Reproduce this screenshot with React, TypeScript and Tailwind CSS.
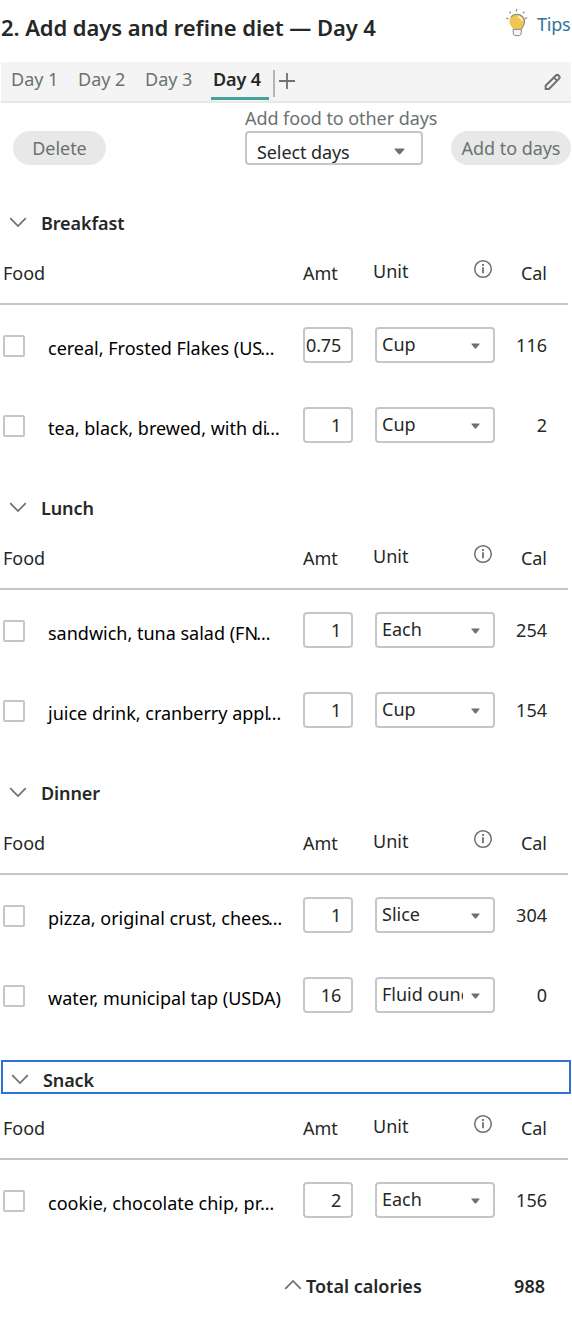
import { ReactNode } from 'react';

type Food = { name: string; cut?: boolean; amt: string; unit: string; cal: number };
type Meal = { title: string; foods: Food[]; focused?: boolean };

const days = ['Day 1', 'Day 2', 'Day 3'];
const totalCalories = 988;

const meals: Meal[] = [
    {
        title: 'Breakfast',
        foods: [
            { name: 'cereal, Frosted Flakes (US', cut: true, amt: '0.75', unit: 'Cup', cal: 116 },
            { name: 'tea, black, brewed, with di', cut: true, amt: '1', unit: 'Cup', cal: 2 },
        ],
    },
    {
        title: 'Lunch',
        foods: [
            { name: 'sandwich, tuna salad (FN', cut: true, amt: '1', unit: 'Each', cal: 254 },
            { name: 'juice drink, cranberry appl', cut: true, amt: '1', unit: 'Cup', cal: 154 },
        ],
    },
    {
        title: 'Dinner',
        foods: [
            { name: 'pizza, original crust, chees', cut: true, amt: '1', unit: 'Slice', cal: 304 },
            { name: 'water, municipal tap (USDA)', amt: '16', unit: 'Fluid ounce', cal: 0 },
        ],
    },
    {
        title: 'Snack',
        focused: true,
        foods: [{ name: 'cookie, chocolate chip, pr', cut: true, amt: '2', unit: 'Each', cal: 156 }],
    },
];

function Chevron({ className }: { className?: string }) {
    return (
        <svg width="18" height="11" viewBox="0 0 18 11" fill="none" stroke="#6b7270" strokeWidth="1.7" className={className}>
            <path d="M1.2 1.2 9 9l7.8-7.8" />
        </svg>
    );
}

function Caret({ className }: { className?: string }) {
    return (
        <svg viewBox="0 0 12 7" fill="#6b7270" preserveAspectRatio="none" className={className}>
            <path d="M1.2.5h9.6c.6 0 .9.7.5 1.1L7 6.1c-.6.6-1.4.6-2 0L.7 1.6C.3 1.2.6.5 1.2.5Z" />
        </svg>
    );
}

function Bulb() {
    return (
        <svg width="24" height="30" viewBox="0 0 24 30" fill="none" className="mt-[8px]">
            <g stroke="#858b8b" strokeWidth="1.2">
                <path d="M11.5 1v2.4M4.4 3.6l1.4 1.8M19.4 3.6 18 5.4M1.2 10.2l2.2.6M22.2 9.8l-2.2.8" />
            </g>
            <path
                d="M12 6.2c-4.4 0-7.5 3.2-7.5 7.4 0 3.6 2.5 5.1 3.8 7.8h7.7c1.1-2.7 3.6-4.2 3.6-7.8 0-4.2-3.2-7.4-7.6-7.4Z"
                fill="#f0c651"
            />
            <path
                d="M6 9.2c1.3-1.9 3.4-3 6-3 4.4 0 7.6 3.2 7.6 7.4 0 3.6-2.4 5-3.2 8"
                stroke="#858b8b"
                strokeWidth="1.1"
            />
            <path d="M13 8.8c2.2.3 3.7 1.7 4 3.9" stroke="#fff5d0" strokeWidth="1.6" />
            <path d="M8 21.4h8.4l-.4 5-1.4 1.2H9.8l-1.4-1.2Z" fill="#f3f4f4" stroke="#858b8b" />
        </svg>
    );
}

function Pencil() {
    return (
        <svg width="18" height="18" viewBox="0 0 18 18" fill="none" stroke="#6b7270" strokeWidth="2" strokeLinejoin="round">
            <path d="m1.6 12.8 10.3-10.3c1.8-1.8 5 1.2 3.2 3.1L4.9 16H1.6Z" />
            <path d="m9.9 4.6 3.1 3.1" strokeWidth="1.7" />
        </svg>
    );
}

function InfoIcon() {
    return (
        <svg width="20" height="20" viewBox="0 0 20 20" fill="none" stroke="#6b7270" strokeWidth="1.5">
            <circle cx="10" cy="10" r="8.3" />
            <path d="M10 8.3v6" strokeWidth="1.8" />
            <path d="M10 5v1.9" strokeWidth="1.8" />
        </svg>
    );
}

function PillButton({ className, children }: { className: string; children: ReactNode }) {
    return (
        <button className={`h-[34px] shrink-0 rounded-full bg-[#e8e8e8] leading-[34px] tracking-[-0.05px] text-[#6b7270] ${className}`}>
            {children}
        </button>
    );
}

function FoodRow({ food }: { food: Food }) {
    return (
        <div className="flex h-20 items-start pl-[3px] pt-[22px]">
            <span className="mt-2 size-[22px] shrink-0 rounded-[2px] border-2 border-[#c6c6c6]" />
            <span className="ml-[23px] mt-[9px] w-[255px] whitespace-nowrap text-black">
                {food.name}
                {food.cut && <span className="-ml-[2px] tracking-normal">…</span>}
            </span>
            <span className="h-9 w-[50px] shrink-0 rounded-[4px] border-2 border-[#c6c6c6] pr-[10px] pt-1 text-right tracking-[-0.2px]">
                {food.amt}
            </span>
            <span className="ml-[22px] flex h-9 w-[120px] shrink-0 rounded-[4px] border-2 border-[#c6c6c6] pl-[5px] pt-[3px]">
                <span className="w-[81px] overflow-hidden whitespace-nowrap">{food.unit}</span>
                <Caret className="ml-[8px] mt-[11px] h-[6px] w-[9px]" />
            </span>
            <span className="mt-[6px] w-[52px] text-right">{food.cal}</span>
        </div>
    );
}

function MealSection({ meal }: { meal: Meal }) {
    return (
        <section className="mb-[25px]">
            <div
                className={
                    meal.focused
                        ? 'ml-px mr-px flex h-[34px] border-2 border-[#2f72d6] pl-2 pt-px'
                        : 'flex h-[34px] pl-[9px] pt-px'
                }
            >
                <Chevron className="mt-[11px]" />
                <h2 className="ml-[14px] mt-[5px] font-semibold tracking-[-0.1px]">{meal.title}</h2>
            </div>
            <div className="mr-1 flex h-[66px] items-start border-b-2 border-[#c6c6c6] pl-[3px] pt-[22px]">
                <span className="w-[300px]">Food</span>
                <span className="w-[70px]">Amt</span>
                <span className="-mt-[2px] w-[100px]">Unit</span>
                <span className="-mt-[2px]">
                    <InfoIcon />
                </span>
                <span className="w-[54px] text-right">Cal</span>
            </div>
            {meal.foods.map((food) => (
                <FoodRow key={food.name} food={food} />
            ))}
        </section>
    );
}

export default function App() {
    return (
        <main className="h-[1318px] w-[572px] overflow-hidden bg-white font-['Noto_Sans',sans-serif] text-[18px] leading-6 text-[#252827]">
            <header className="flex h-[62px] items-start">
                <h1 className="mt-[11px] w-[505px] pl-px text-[22px] font-semibold leading-8 tracking-[-0.08px]">
                    2. Add days and refine diet — Day 4
                </h1>
                <Bulb />
                <a href="#" className="ml-[8px] mt-3 tracking-[-0.2px] text-[#31769b]">Tips</a>
            </header>

            <nav className="mx-px flex h-[41px] items-start border-b-2 border-[#e8e8e8] bg-[#f4f4f4] pl-[10px] text-[#6b7270]">
                {days.map((day) => (
                    <button key={day} className="mr-5 mt-[5px] w-[47px] whitespace-nowrap text-left">{day}</button>
                ))}
                <button className="-ml-px h-[38px] w-[58px] whitespace-nowrap border-b-3 border-[#4a9f9c] pb-px pl-[2px] text-left font-semibold tracking-[-0.15px] text-[#252827]">
                    Day 4
                </button>
                <span className="ml-[4px] mt-2 h-[27px] w-[2px] bg-[#b4b6b5]" />
                <svg width="16" height="16" viewBox="0 0 16 16" stroke="#6b7270" strokeWidth="1.8" className="ml-1 mt-[11px]">
                    <path d="M8 0v16M0 8h16" />
                </svg>
                <button className="ml-auto mr-[9px] mt-[11px]">
                    <Pencil />
                </button>
            </nav>

            <div className="flex h-[102px] items-start pl-[13px]">
                <PillButton className="mt-7 w-[93px]">Delete</PillButton>
                <div className="ml-[139px] mt-[3px] w-[206px] shrink-0">
                    <label className="mb-px block whitespace-nowrap tracking-[-0.07px] text-[#6b7270]">Add food to other days</label>
                    <div className="flex h-[34px] w-[178px] overflow-hidden rounded-[4px] border-2 border-[#c6c6c6] pl-[10px] pt-[7px]">
                        <span className="w-[137px] tracking-[-0.1px]">Select days</span>
                        <Caret className="mt-[8px] h-[7px] w-[11px]" />
                    </div>
                </div>
                <PillButton className="mt-7 w-[120px]">Add to days</PillButton>
            </div>

            {meals.map((meal) => (
                <MealSection key={meal.title} meal={meal} />
            ))}

            <footer className="flex items-start pl-[284px] pt-[9px] font-semibold">
                <Chevron className="mt-[5px] rotate-180" />
                <span className="ml-1">Total calories</span>
                <span className="ml-auto mr-[27px]">{totalCalories}</span>
            </footer>
        </main>
    );
}
